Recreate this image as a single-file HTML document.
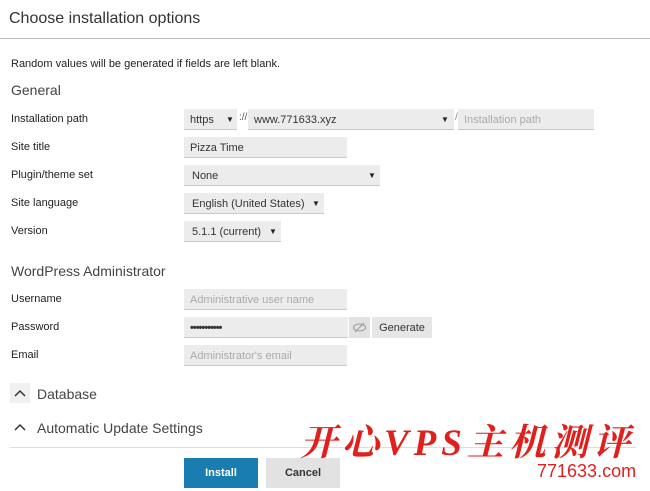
<!DOCTYPE html>
<html><head><meta charset="utf-8"><style>
body{margin:0;width:650px;height:491px;background:#fff;font-family:"Liberation Sans","Noto Sans CJK SC",sans-serif;color:#333;position:relative;overflow:hidden}
.a{position:absolute;white-space:nowrap}
.l{font-size:11px;color:#222;left:11px}
.f{position:absolute;background:#ececec;border-bottom:1px solid #c8c8c8;font-size:11px;color:#333;box-sizing:border-box;padding-left:6px;line-height:22px}
.ph{color:#aaa}
.ar{position:absolute;font-size:8px;color:#222}
</style></head><body>
<div class="a" style="left:9px;top:10px;font-size:16px;color:#333">Choose installation options</div>
<div class="a" style="left:0;top:38px;width:650px;height:1px;background:#bbb"></div>
<div class="a" style="left:11px;top:58px;font-size:11px;color:#222">Random values will be generated if fields are left blank.</div>
<div class="a" style="left:11px;top:82px;font-size:14px;color:#444">General</div>

<div class="a l" style="top:113px">Installation path</div>
<div class="f" style="left:184px;top:109px;width:53px;height:21px">https<span class="ar" style="left:42px;top:0">▼</span></div>
<div class="a" style="left:239px;top:112px;font-size:10px;color:#555">://</div>
<div class="f" style="left:248px;top:109px;width:206px;height:21px">www.771633.xyz<span class="ar" style="left:193px;top:0">▼</span></div>
<div class="a" style="left:455px;top:112px;font-size:10px;color:#888">/</div>
<div class="f ph" style="left:458px;top:109px;width:136px;height:21px">Installation path</div>

<div class="a l" style="top:141px">Site title</div>
<div class="f" style="left:184px;top:137px;width:163px;height:21px">Pizza Time</div>

<div class="a l" style="top:169px">Plugin/theme set</div>
<div class="f" style="left:184px;top:165px;width:196px;height:21px;padding-left:8px">None<span class="ar" style="left:184px;top:0">▼</span></div>

<div class="a l" style="top:197px">Site language</div>
<div class="f" style="left:184px;top:193px;width:140px;height:21px;padding-left:8px">English (United States)<span class="ar" style="left:128px;top:0">▼</span></div>

<div class="a l" style="top:225px">Version</div>
<div class="f" style="left:184px;top:221px;width:97px;height:21px;padding-left:8px">5.1.1 (current)<span class="ar" style="left:85px;top:0">▼</span></div>

<div class="a" style="left:11px;top:263px;font-size:14px;color:#444">WordPress Administrator</div>

<div class="a l" style="top:293px">Username</div>
<div class="f ph" style="left:184px;top:289px;width:163px;height:21px">Administrative user name</div>

<div class="a l" style="top:321px">Password</div>
<div class="f" style="left:184px;top:317px;width:164px;height:21px;letter-spacing:-1px;font-weight:bold">•••••••••••</div>
<div class="a" style="left:349px;top:317px;width:21px;height:21px;background:#e2e2e2"><svg width="21" height="21"><ellipse cx="10.5" cy="10.5" rx="6" ry="3.5" fill="none" stroke="#999" stroke-width="1"/><line x1="6" y1="15" x2="15" y2="6" stroke="#999"/></svg></div>
<div class="a" style="left:372px;top:317px;width:60px;height:21px;background:#e6e6e6;font-size:11px;line-height:22px;text-align:center;color:#333">Generate</div>

<div class="a l" style="top:349px">Email</div>
<div class="f ph" style="left:184px;top:345px;width:163px;height:21px">Administrator's email</div>

<div class="a" style="left:10px;top:383px;width:20px;height:20px;background:#f0f0f0"></div>
<svg class="a" style="left:12px;top:387px" width="16" height="12"><polyline points="3,9 8,4 13,9" fill="none" stroke="#333" stroke-width="1.5"/></svg>
<div class="a" style="left:37px;top:386px;font-size:14px;color:#444">Database</div>
<svg class="a" style="left:12px;top:421px" width="16" height="12"><polyline points="3,9 8,4 13,9" fill="none" stroke="#333" stroke-width="1.5"/></svg>
<div class="a" style="left:37px;top:420px;font-size:14px;color:#444">Automatic Update Settings</div>
<div class="a" style="left:10px;top:447px;width:626px;height:1px;background:#ddd"></div>

<div class="a" style="left:184px;top:458px;width:74px;height:30px;background:#1a7db0;color:#fff;font-size:11px;font-weight:bold;line-height:30px;text-align:center">Install</div>
<div class="a" style="left:266px;top:458px;width:74px;height:30px;background:#e2e2e2;color:#333;font-size:11px;font-weight:bold;line-height:30px;text-align:center">Cancel</div>

<div class="a" style="left:300px;top:412px;font-size:37px;color:#e0201c;font-family:'Liberation Serif','Noto Serif CJK SC',serif;font-weight:bold;font-style:italic;letter-spacing:5px">开心VPS主机测评</div>
<div class="a" style="left:537px;top:461px;font-size:18px;color:#e0201c">771633.com</div>
</body></html>
